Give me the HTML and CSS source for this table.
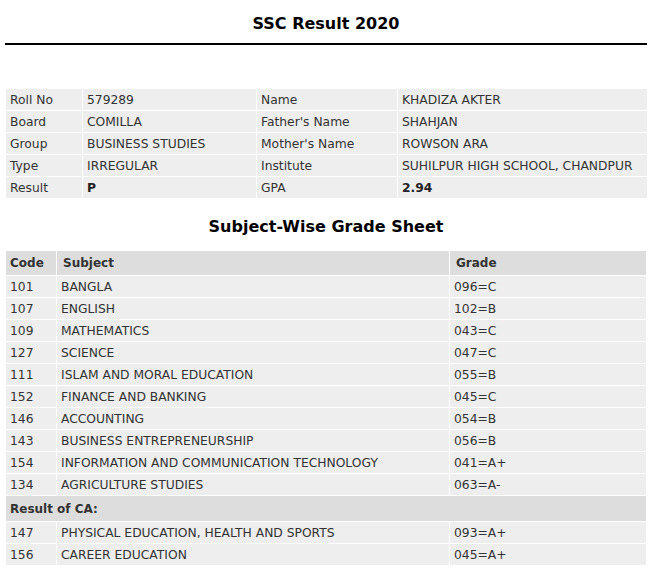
FILE: index.html
```html
<!DOCTYPE html>
<html lang="en">
<head>
<meta charset="utf-8">
<title>SSC Result 2020</title>
<link rel="stylesheet" href="styles.css">
</head>
<body>
<div class="page">
  <h1 class="title">SSC Result 2020</h1>
  <div class="rule"></div>

  <table class="info">
    <colgroup>
      <col class="c-label1"><col class="c-val1"><col class="c-label2"><col class="c-val2">
    </colgroup>
    <tr><td>Roll No</td><td>579289</td><td>Name</td><td>KHADIZA AKTER</td></tr>
    <tr><td>Board</td><td>COMILLA</td><td>Father's Name</td><td>SHAHJAN</td></tr>
    <tr><td>Group</td><td>BUSINESS STUDIES</td><td>Mother's Name</td><td>ROWSON ARA</td></tr>
    <tr><td>Type</td><td>IRREGULAR</td><td>Institute</td><td>SUHILPUR HIGH SCHOOL, CHANDPUR</td></tr>
    <tr><td>Result</td><td class="strong">P</td><td>GPA</td><td class="strong">2.94</td></tr>
  </table>

  <h2 class="subtitle">Subject-Wise Grade Sheet</h2>

  <table class="grades">
    <colgroup>
      <col class="c-code"><col class="c-subject"><col class="c-grade">
    </colgroup>
    <tr class="head"><th>Code</th><th>Subject</th><th>Grade</th></tr>
    <tr><td>101</td><td>BANGLA</td><td>096=C</td></tr>
    <tr><td>107</td><td>ENGLISH</td><td>102=B</td></tr>
    <tr><td>109</td><td>MATHEMATICS</td><td>043=C</td></tr>
    <tr><td>127</td><td>SCIENCE</td><td>047=C</td></tr>
    <tr><td>111</td><td>ISLAM AND MORAL EDUCATION</td><td>055=B</td></tr>
    <tr><td>152</td><td>FINANCE AND BANKING</td><td>045=C</td></tr>
    <tr><td>146</td><td>ACCOUNTING</td><td>054=B</td></tr>
    <tr><td>143</td><td>BUSINESS ENTREPRENEURSHIP</td><td>056=B</td></tr>
    <tr><td>154</td><td>INFORMATION AND COMMUNICATION TECHNOLOGY</td><td>041=A+</td></tr>
    <tr><td>134</td><td>AGRICULTURE STUDIES</td><td>063=A-</td></tr>
    <tr class="head ca"><th colspan="3">Result of CA:</th></tr>
    <tr><td>147</td><td>PHYSICAL EDUCATION, HEALTH AND SPORTS</td><td>093=A+</td></tr>
    <tr><td>156</td><td>CAREER EDUCATION</td><td>045=A+</td></tr>
  </table>
</div>
</body>
</html>
```

FILE: styles.css
```css
html, body {
  margin: 0;
  padding: 0;
  background: #ffffff;
}

body {
  font-family: "DejaVu Sans", Verdana, sans-serif;
  font-size: 12.3px;
  color: #333333;
}

.page {
  padding: 0 4px 0 5px;
}

.title,
.subtitle {
  margin: 0;
  font-size: 16px;
  font-weight: bold;
  line-height: 20px;
  color: #000000;
  text-align: center;
}

.title {
  padding-top: 14px;
}

.rule {
  height: 2px;
  background: #000000;
  margin-top: 9px;
}

table {
  border-collapse: separate;
  border-spacing: 1px;
  table-layout: fixed;
  width: 642px;
  margin-left: 0;
}

td, th {
  padding: 0 4px;
  text-align: left;
  white-space: nowrap;
  background: #eeeeee;
}

.info {
  margin-top: 43px;
}

.info td {
  height: 21px;
}

.c-label1 { width: 76px; }
.c-val1 { width: 173px; }
.c-label2 { width: 140px; }
.c-val2 { width: 249px; }

.strong {
  font-weight: bold;
  color: #222222;
}

.subtitle {
  margin-top: 18px;
}

.grades {
  margin-top: 13px;
}

.grades td {
  height: 21px;
}

.grades .head th {
  height: 24px;
  background: #dddddd;
  font-weight: bold;
  font-size: 12px;
  color: #333333;
}

.grades .head.ca th {
  height: 25px;
}

.grades .head th + th {
  padding-left: 6px;
}

.c-code { width: 50px; }
.c-subject { width: 392px; }
.c-grade { width: 196px; }
```
